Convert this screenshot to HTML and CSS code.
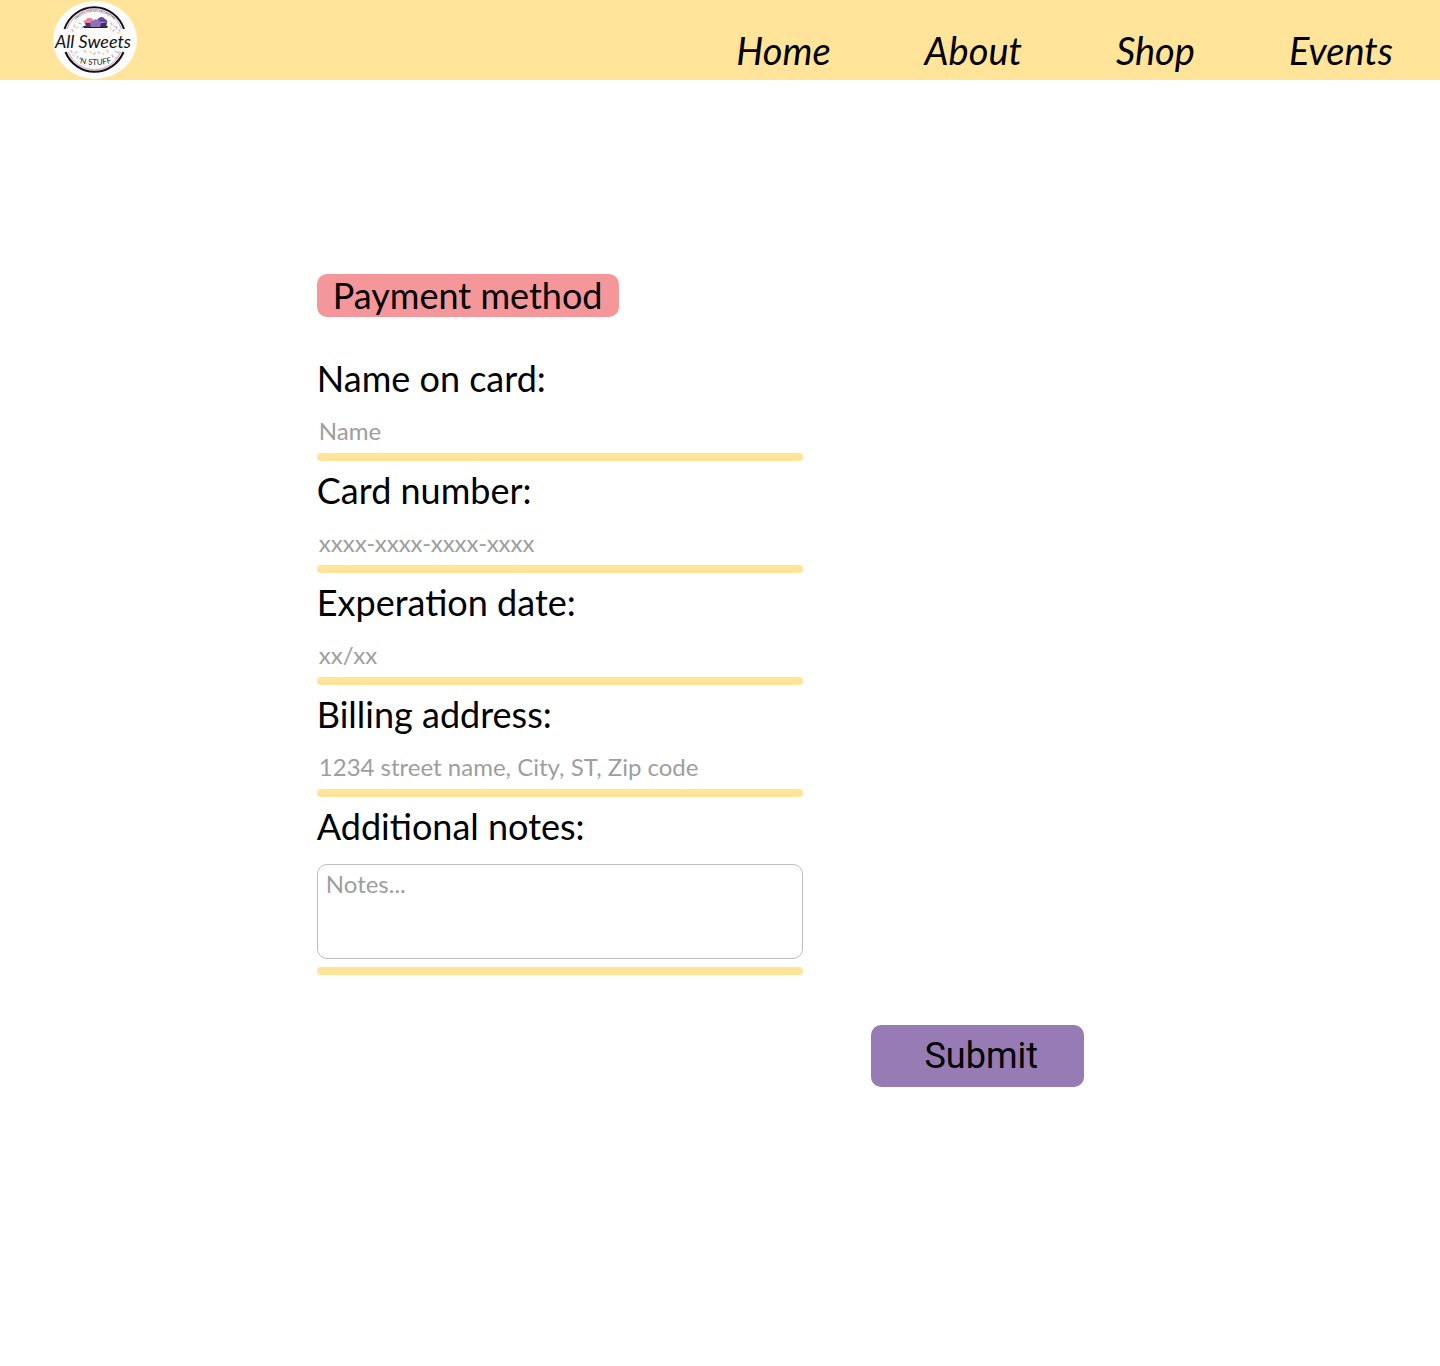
FILE: index.html
```html
<!DOCTYPE html>
<html lang="en">
<head>
  <meta charset="UTF-8" />
  <meta name="viewport" content="width=device-width, initial-scale=1.0"/>
  <title>Payment - All Sweets 'N Stuff</title>
  <link rel="stylesheet" href="styles.css">
</head>
<body>

  <header class="header">
    <a class="logo" href="#" aria-label="All Sweets 'N Stuff">
      <svg width="84" height="80" viewBox="0 0 84 80">
        <ellipse cx="42" cy="40" rx="42" ry="39" fill="#fcfcfc"/>

        <!-- ring, open on both sides for the name -->
        <g fill="none" stroke="#111" stroke-width="2">
          <path d="M11.500 29 A31.500 32.500 0 0 1 71 29"/>
          <path d="M12.500 52 A31.500 32.500 0 0 0 70.500 52"/>
        </g>
        <g fill="none" stroke="#cf93d2" stroke-width="1">
          <path d="M14 29 A29 30 0 0 1 68.500 29"/>
          <path d="M15 52 A29 30 0 0 0 68 52"/>
        </g>

        <!-- sprinkles -->
        <g stroke-width="1.200" stroke-linecap="round">
          <path stroke="#f6a6a0" d="M21 25l1 2M61 26l2 1M22 53l2-1M31 51l2 1M54 50l1 2M63 59l1-2M66 30l1 1"/>
          <path stroke="#8fc8f5" d="M26 23l2 1M63 29l1-2M24 58l1-2M45 52l2 1M62 51l2 1M29 28l1-1M58 23l1 2"/>
          <path stroke="#f8cc72" d="M24 28l1-1M65 33l1-1M37 51l1 2M50 54l1-1M20 55l1 1M57 28l1 1"/>
          <path stroke="#cb9be0" d="M19 30l1 1M60 31l1-1M18 51l1 1M41 54l1-1M59 55l1 2M65 53l1-1"/>
        </g>

        <!-- cupcakes -->
        <path d="M30 26h25l-1 2H31z" fill="#222"/>
        <path d="M32 23h9l-1 4h-7z" fill="#4a356d"/>
        <path d="M45 23h9l-1 4h-7z" fill="#3e2f68"/>
        <path d="M31 23q-1-3 2-3 1-3 4-2 4 0 4 5z" fill="#ee8198"/>
        <path d="M44 22q0-4 4-5 3 0 4 2 3 1 2 4z" fill="#6945a5"/>
        <path d="M37 24q0-3 3-3 2-3 5-1 4 1 3 4l-1 3h-9z" fill="#8b72b7"/>

        <path id="tag-arc" d="M16 36 A26 24 0 0 1 68 36" fill="none"/>
        <path id="stuff-arc" d="M20 61 Q42 69 64 61" fill="none"/>
        <text class="logo-tag"><textPath href="#tag-arc" startOffset="50%" text-anchor="middle">SWEETS FOR ALL OCCASIONS</textPath></text>
        <text class="logo-name" x="40" y="48" text-anchor="middle">All Sweets</text>
        <text class="logo-stuff"><textPath href="#stuff-arc" startOffset="50%" text-anchor="middle">'N STUFF</textPath></text>
      </svg>
    </a>
    <nav class="nav">
      <a href="#">Home</a>
      <a href="#">About</a>
      <a href="#">Shop</a>
      <a href="#">Events</a>
    </nav>
  </header>

  <main class="content">
    <h1 class="title">Payment method</h1>

    <form class="payment-form">
      <div class="field">
        <label for="name">Name on card:</label>
        <input id="name" type="text" placeholder="Name">
      </div>
      <div class="field">
        <label for="card">Card number:</label>
        <input id="card" type="text" placeholder="xxxx-xxxx-xxxx-xxxx">
      </div>
      <div class="field">
        <label for="date">Experation date:</label>
        <input id="date" type="text" placeholder="xx/xx">
      </div>
      <div class="field">
        <label for="address">Billing address:</label>
        <input id="address" type="text" placeholder="1234 street name, City, ST, Zip code">
      </div>
      <div class="field">
        <label for="notes">Additional notes:</label>
        <textarea id="notes" placeholder="Notes..."></textarea>
      </div>
      <button class="submit" type="submit">Submit</button>
    </form>
  </main>

</body>
</html>
```

FILE: styles.css
```css
* {
  box-sizing: border-box;
}

body {
  margin: 0;
  font-family: Lato, sans-serif;
  background-color: #ffffff;
  color: #000000;
}

.header {
  display: flex;
  justify-content: space-between;
  height: 80px;
  padding: 0 47px 0 53px;
  background-color: #ffe499;
}

.logo svg {
  display: block;
}

.logo-name {
  font-family: Lato, sans-serif;
  font-size: 18px;
  font-style: italic;
  fill: #111111;
}

.logo-stuff {
  font-family: Lato, sans-serif;
  font-size: 8px;
  fill: #222222;
}

.logo-tag {
  font-family: Lato, sans-serif;
  font-size: 3px;
  fill: #333333;
}

.nav {
  display: flex;
  gap: 94px;
  padding-top: 28px;
}

.nav a {
  font-size: 38px;
  font-style: italic;
  line-height: 45px;
  color: #000000;
  text-decoration: none;
}

.content {
  max-width: 1084px;
  padding: 194px 0 80px 22%;
}

.title {
  width: fit-content;
  margin: 0 0 40px;
  padding: 0 16px;
  border-radius: 10px;
  background-color: #f5969a;
  font-size: 36px;
  font-weight: 400;
  line-height: 43px;
}

.payment-form {
  display: flex;
  flex-direction: column;
  gap: 8px;
}

.field {
  display: flex;
  flex-direction: column;
  width: 100%;
  max-width: 486px;
}

/* yellow line under each field */
.field::after {
  content: "";
  height: 8px;
  border-radius: 4px;
  background-color: #ffe499;
}

.field label {
  margin-bottom: 16px;
  font-size: 36px;
  line-height: 43px;
}

.field input {
  width: 100%;
  height: 37px;
  padding: 0 0 8px 2px;
  border: none;
  background: none;
  font-family: Lato, sans-serif;
  font-size: 24px;
}

.field textarea {
  width: 100%;
  height: 95px;
  margin-bottom: 8px;
  padding: 4px 8px;
  border: 1px solid #bdbdbd;
  border-radius: 10px;
  font-family: Lato, sans-serif;
  font-size: 24px;
  line-height: 29px;
  resize: none;
}

.field input::placeholder,
.field textarea::placeholder {
  color: #9e9e9e;
}

.submit {
  align-self: flex-end;
  height: 62px;
  margin-top: 42px;
  padding: 0 46px 0 53px;
  border: none;
  border-radius: 10px;
  background-color: #977bb5;
  color: #000000;
  font-family: Roboto, sans-serif;
  font-size: 36px;
  cursor: pointer;
}
```
